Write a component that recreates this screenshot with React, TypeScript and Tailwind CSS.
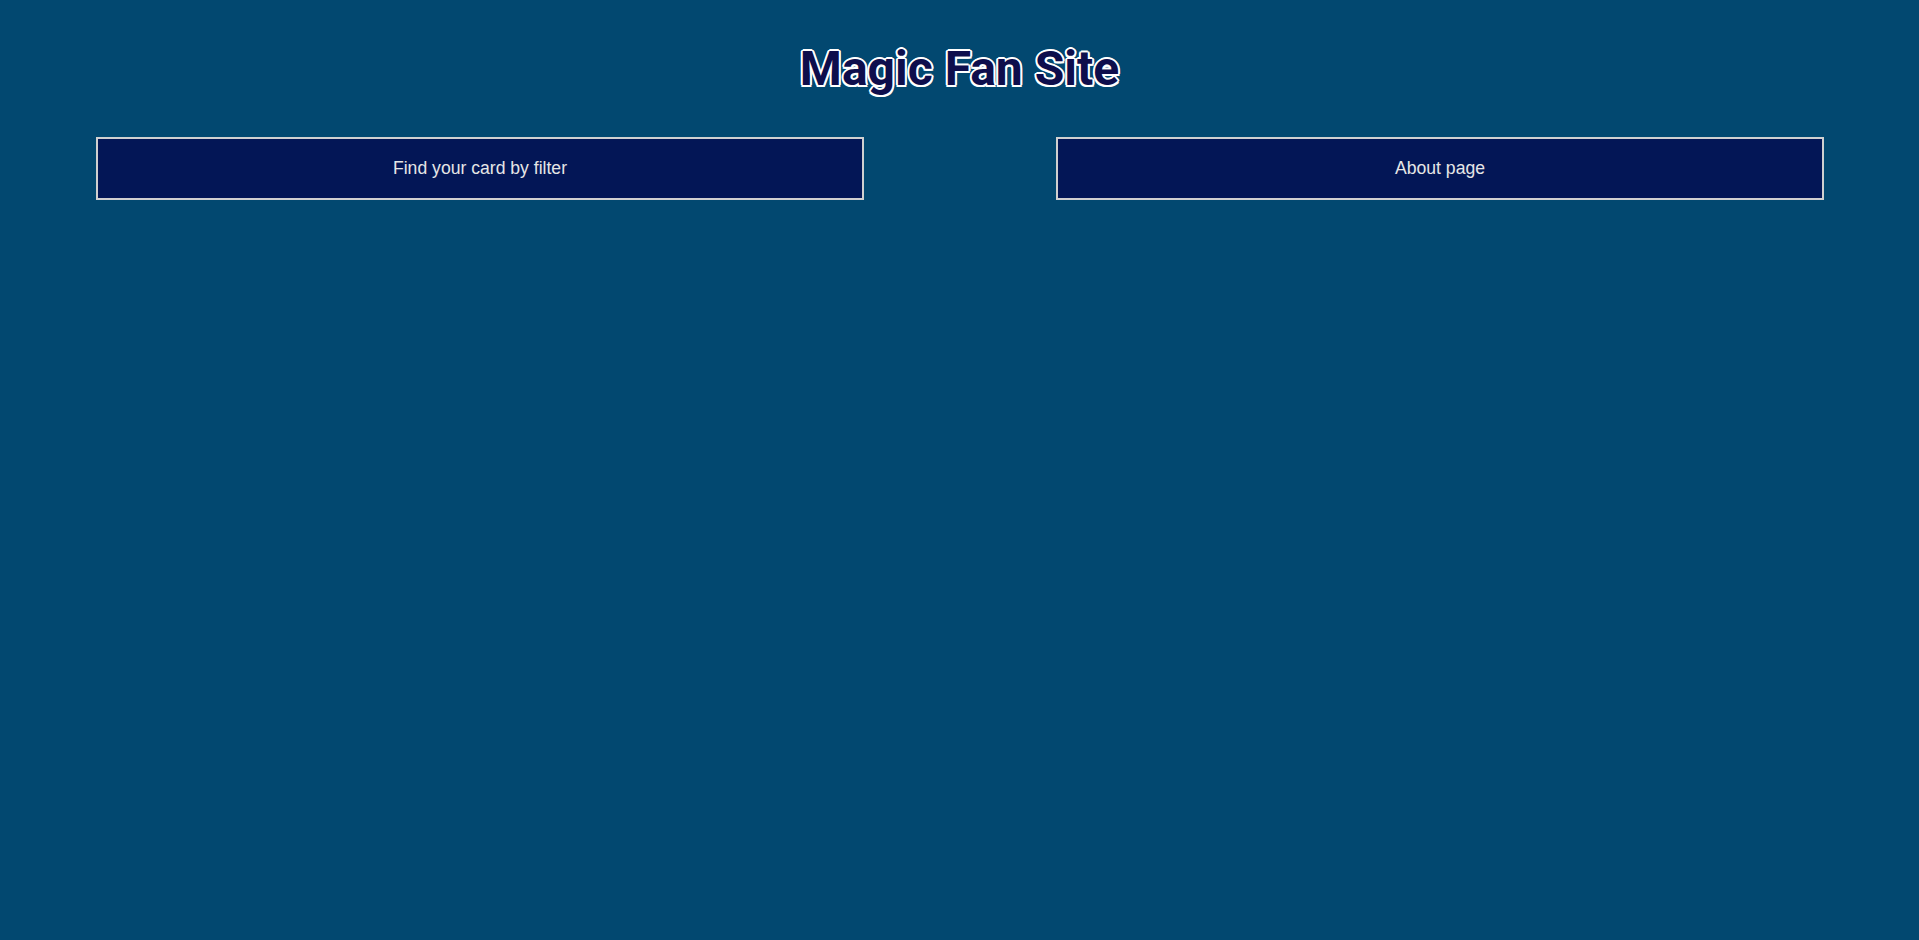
import React from 'react';

export default function App() {
  return (
    <div className="min-h-screen w-full bg-[#024870] font-['Liberation_Sans',Arial,sans-serif]">
      <header className="pt-[41px] pb-[40px] flex justify-center">
        <h1 className="font-['Roboto',sans-serif] font-bold text-[48px] leading-[56px] text-[#0e0e4c] [text-shadow:-1.5px_-1.5px_0_#fff,1.5px_-1.5px_0_#fff,-1.5px_1.5px_0_#fff,1.5px_1.5px_0_#fff,0_-2px_0_#fff,0_2px_0_#fff,-2px_0_0_#fff,2px_0_0_#fff]">
          Magic Fan Site
        </h1>
      </header>

      <nav className="flex justify-between pl-[96px] pr-[95px]">
        <button className="w-[768px] h-[63px] bg-[#031656] border-2 border-[#d0d0d0] text-[#e6e6e6] text-[1.1rem]">
          Find your card by filter
        </button>
        <button className="w-[768px] h-[63px] bg-[#031656] border-2 border-[#d0d0d0] text-[#e6e6e6] text-[1.1rem]">
          About page
        </button>
      </nav>
    </div>
  );
}
